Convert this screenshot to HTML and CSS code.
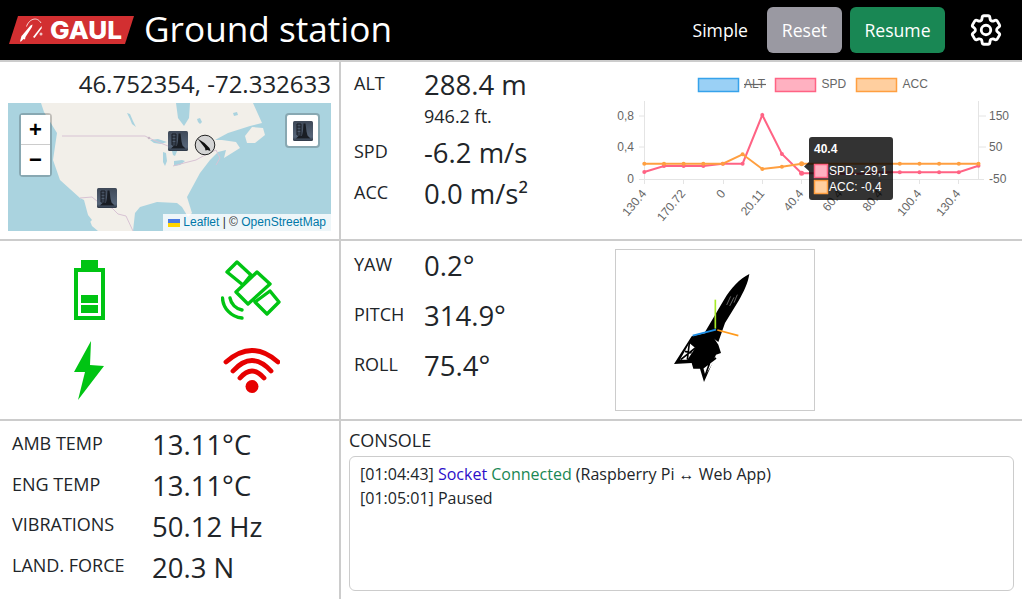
FILE: index.html
```html
<!DOCTYPE html>
<html lang="en">
<head>
<meta charset="utf-8">
<title>Ground station</title>
<link rel="stylesheet" href="styles.css">
</head>
<body>
<svg class="defs" width="0" height="0" aria-hidden="true">
  <defs>
    <linearGradient id="towerbg" x1="0" y1="0" x2="0" y2="1"><stop offset="0" stop-color="#3f4958"/><stop offset=".8" stop-color="#566579"/><stop offset="1" stop-color="#2c3644"/></linearGradient>
    <symbol id="tower" viewBox="0 0 20 20">
      <rect x="0" y="0" width="20" height="20" rx="1.500" fill="url(#towerbg)"/>
      <path d="M4 3h4v11H4zM4 6h4M4 9h4M4 12h4" fill="none" stroke="#191d24" stroke-width="1"/>
      <path d="M10.500 2.500l2 0 1 8 1 4 3 3H3l3-3h3l1-5z" fill="#191d24"/>
    </symbol>
  </defs>
</svg>
<div class="app">
  <header class="topbar">
    <svg class="logo" viewBox="0 0 125 28" width="125" height="28">
      <polygon points="9,0 125,0 116,28 0,28" fill="#d22f31"/>
      <path d="M11 25.500l1.500-5.500 1-1 8-9.500 2-1-.5 2.500-6.500 10-.5 2.500-1.500-.5-2.500 2.500z" fill="#fff"/>
      <path d="M24 21l7-9 2-2-.5 2.500-7 9.500z" fill="#fff"/>
      <path d="M17.500 10.500C20 3 28 0 32 7" fill="none" stroke="#fff" stroke-width=".8"/>
      <circle cx="32" cy="18" r="1.500" fill="#f2c6c6"/>
      <text class="logo-text" x="41" y="22.500" textLength="72" lengthAdjust="spacingAndGlyphs">GAUL</text>
    </svg>
    <h1 class="title">Ground station</h1>
    <nav class="actions">
      <span class="simple">Simple</span>
      <button class="btn btn-reset" type="button">Reset</button>
      <button class="btn btn-resume" type="button">Resume</button>
      <svg class="gear" viewBox="0 0 24 24" width="38" height="38" fill="none" stroke="#fff" stroke-width="1.800" stroke-linejoin="round">
        <path d="M9.594 3.94c.09-.542.56-.94 1.11-.94h2.593c.55 0 1.02.398 1.11.94l.213 1.281c.063.374.313.686.645.87.074.04.147.083.22.127.325.196.72.257 1.075.124l1.217-.456a1.125 1.125 0 0 1 1.37.49l1.296 2.247a1.125 1.125 0 0 1-.26 1.431l-1.003.827c-.293.241-.438.613-.43.992a7.723 7.723 0 0 1 0 .255c-.008.378.137.75.43.991l1.004.827c.424.35.534.955.26 1.43l-1.298 2.247a1.125 1.125 0 0 1-1.369.491l-1.217-.456c-.355-.133-.75-.072-1.076.124a6.47 6.47 0 0 1-.22.128c-.331.183-.581.495-.644.869l-.213 1.281c-.09.543-.56.94-1.11.94h-2.594c-.55 0-1.019-.398-1.11-.94l-.213-1.281c-.062-.374-.312-.686-.644-.87a6.52 6.52 0 0 1-.22-.127c-.325-.196-.72-.257-1.076-.124l-1.217.456a1.125 1.125 0 0 1-1.369-.49l-1.297-2.247a1.125 1.125 0 0 1 .26-1.431l1.004-.827c.292-.24.437-.613.43-.991a6.932 6.932 0 0 1 0-.255c.007-.38-.138-.751-.43-.992l-1.004-.827a1.125 1.125 0 0 1-.26-1.43l1.297-2.247a1.125 1.125 0 0 1 1.37-.491l1.216.456c.356.133.751.072 1.076-.124.072-.044.146-.086.22-.128.332-.183.582-.495.644-.869l.214-1.28Z"/>
        <circle cx="12" cy="12" r="3"/>
      </svg>
    </nav>
  </header>

  <main class="board">
    <section class="cell gps">
      <div class="coords">46.752354, -72.332633</div>
      <div class="map">
        <svg class="map-base" viewBox="8 103 323 128" width="323" height="128">
          <rect x="8" y="103" width="323" height="128" fill="#aad3df"/>
          <path d="M41 103L44 112 57 133 53 160 60 180 80 198 84 206 92 226 98 231H133L135 213 140 207 157 202 177 203 182 207 188 217 192 213 187 197 200 173 210 160 218 152 226 150 224 158 240 148 236 142 222 140 215 140 228 133 250 126 262 123 253 103Z" fill="#f2efe9"/>
          <path d="M245 136L252 127 263 128 265 135 255 143 247 143Z" fill="#f2efe9"/>
          <path d="M176 103H190L189 118 184 126 178 118ZM80 198L84 200 88 215 92 220 90 222 84 210ZM150 140l8-1 9 3-6 2-7-1ZM163 152l3 1 1 8-2 5-2-4ZM170 146l6-2 2 5-3 7-2-1-1-4ZM174 161l8-1 3 1-5 4-6 1ZM127 113l3 1 3 7 3 6-4-3-2-5ZM197 119l3-1 2 4-2 2-2-2ZM233 113l4-1 1 3-4 1Z" fill="#aad3df"/>
          <path d="M62 136H145L149 138 158 142 168 146M173 166L184 163 196 160 205 155 216 150 220 158 216 165M80 198L92 197 103 206 112 208 118 214 126 216 133 231" fill="none" stroke="#d8c3d4" stroke-width="1"/>
          <circle cx="149" cy="138" r="1.300" fill="#c9b8c6"/>
        </svg>
        <svg class="marker marker-a"><use href="#tower"/></svg>
        <svg class="marker marker-b"><use href="#tower"/></svg>
        <svg class="rocket-marker" viewBox="0 0 22 22" width="22" height="22">
          <circle cx="11" cy="11" r="9.800" fill="#d4d4d4" stroke="#222" stroke-width="1"/>
          <path d="M3.500 4.500l7 4.500 5 5 1 3-3-1-2 .5-.5-2.500z" fill="#111"/>
        </svg>
        <div class="zoom-ctl"><span class="zoom-btn zoom-in">+</span><span class="zoom-btn">−</span></div>
        <div class="layers"><svg class="layer-icon"><use href="#tower"/></svg></div>
        <div class="attribution"><svg class="flag" viewBox="0 0 12 8" width="12" height="8"><rect width="12" height="4" fill="#4c7be1"/><rect y="4" width="12" height="4" fill="#ffd500"/></svg> <span class="link">Leaflet</span> | © <span class="link">OpenStreetMap</span></div>
      </div>
    </section>

    <section class="cell flight">
      <div class="stats">
        <div class="stat stat-alt"><span class="label">ALT</span><span class="value">288.4 m</span></div>
        <div class="sub">946.2 ft.</div>
        <div class="stat stat-spd"><span class="label">SPD</span><span class="value">-6.2 m/s</span></div>
        <div class="stat stat-acc"><span class="label">ACC</span><span class="value">0.0 m/s²</span></div>
      </div>
      <svg class="chart" viewBox="600 62 422 176" width="422" height="176">
        <g class="legend">
          <rect x="699.500" y="78.500" width="40" height="13" fill="#9ad0f5" stroke="#36a2eb" stroke-width="1.500"/>
          <text x="745" y="88">ALT</text><line x1="745" y1="84.500" x2="767" y2="84.500" stroke="#666" stroke-width="1.200"/>
          <rect x="776.500" y="78.500" width="40" height="13" fill="#ffb1c1" stroke="#ff6384" stroke-width="1.500"/>
          <text x="822.500" y="88">SPD</text>
          <rect x="857.500" y="78.500" width="40" height="13" fill="#ffcf9f" stroke="#ff9f40" stroke-width="1.500"/>
          <text x="903.500" y="88">ACC</text>
        </g>
        <g stroke="#e4e4e4" stroke-width="1">
          <line x1="645.500" y1="101" x2="645.500" y2="184"/>
          <line x1="979.500" y1="101" x2="979.500" y2="179"/>
          <line x1="640" y1="179.500" x2="985" y2="179.500"/>
          <line x1="640" y1="116" x2="645" y2="116"/><line x1="640" y1="147" x2="645" y2="147"/>
          <line x1="980" y1="116" x2="987" y2="116"/><line x1="980" y1="147" x2="987" y2="147"/>
          <line x1="684.500" y1="179" x2="684.500" y2="184"/><line x1="724.500" y1="179" x2="724.500" y2="184"/><line x1="763.500" y1="179" x2="763.500" y2="184"/><line x1="802.500" y1="179" x2="802.500" y2="184"/><line x1="841.500" y1="179" x2="841.500" y2="184"/><line x1="881.500" y1="179" x2="881.500" y2="184"/><line x1="920.500" y1="179" x2="920.500" y2="184"/><line x1="959.500" y1="179" x2="959.500" y2="184"/>
        </g>
        <g class="ticks">
          <text class="end" x="635" y="120">0,8</text><text class="end" x="635" y="151">0,4</text><text class="end" x="635" y="183">0</text>
          <text x="990" y="120">150</text><text x="990" y="151">50</text><text x="990" y="183">-50</text>
          <text class="end" transform="translate(648 194) rotate(-50)">130.4</text>
          <text class="end" transform="translate(687 194) rotate(-50)">170.72</text>
          <text class="end" transform="translate(727 194) rotate(-50)">0</text>
          <text class="end" transform="translate(766 194) rotate(-50)">20.11</text>
          <text class="end" transform="translate(805 194) rotate(-50)">40.4</text>
          <text class="end" transform="translate(844 194) rotate(-50)">60.4</text>
          <text class="end" transform="translate(884 194) rotate(-50)">80.4</text>
          <text class="end" transform="translate(923 194) rotate(-50)">100.4</text>
          <text class="end" transform="translate(962 194) rotate(-50)">130.4</text>
        </g>
        <polyline class="ln-spd" points="645.300,172 665,166 684.600,166 704.300,166 723.900,163.700 743.600,163.700 763.300,115 782.900,154 802.600,173.300 822.200,173.300 841.900,173.800 861.500,173.800 881.200,172.300 900.800,172.300 920.500,172.300 940.100,172.300 959.800,172.300 979.500,165.700"/>
        <polyline class="ln-acc" points="645.300,163.700 665,163.700 684.600,163.700 704.300,163.700 723.900,163.700 743.600,154.300 763.300,169 782.900,166.700 802.600,163.700 822.200,163.700 841.900,163.700 861.500,163.700 881.200,163.700 900.800,163.700 920.500,163.700 940.100,163.700 959.800,163.700 979.500,163.700"/>
        <g class="pt-spd"><circle cx="645.300" cy="172" r="2"/><circle cx="665" cy="166" r="2"/><circle cx="684.600" cy="166" r="2"/><circle cx="704.300" cy="166" r="2"/><circle cx="723.900" cy="163.700" r="2"/><circle cx="743.600" cy="163.700" r="2"/><circle cx="763.300" cy="115" r="2"/><circle cx="782.900" cy="154" r="2"/><circle cx="802.600" cy="173.300" r="2.500"/><circle cx="900.800" cy="172.300" r="2"/><circle cx="920.500" cy="172.300" r="2"/><circle cx="940.100" cy="172.300" r="2"/><circle cx="959.800" cy="172.300" r="2"/><circle cx="979.500" cy="165.700" r="2"/></g>
        <g class="pt-acc"><circle cx="645.300" cy="163.700" r="2"/><circle cx="665" cy="163.700" r="2"/><circle cx="684.600" cy="163.700" r="2"/><circle cx="704.300" cy="163.700" r="2"/><circle cx="723.900" cy="163.700" r="2"/><circle cx="743.600" cy="154.300" r="2"/><circle cx="763.300" cy="169" r="2"/><circle cx="782.900" cy="166.700" r="2"/><circle cx="802.600" cy="163.700" r="2.500"/><circle cx="900.800" cy="163.700" r="2"/><circle cx="920.500" cy="163.700" r="2"/><circle cx="940.100" cy="163.700" r="2"/><circle cx="959.800" cy="163.700" r="2"/><circle cx="979.500" cy="163.700" r="2"/></g>
        <path d="M810 140a3 3 0 0 1 3-3h78a3 3 0 0 1 3 3v57a3 3 0 0 1-3 3h-78a3 3 0 0 1-3-3v-26l-5-4.500 5-4.500z" fill="#000" fill-opacity=".8"/>
        <text class="tip-title" x="815" y="153">40.4</text>
        <rect x="815.500" y="164.500" width="13" height="13" fill="#ffb1c1" stroke="#ff6384" stroke-width="1.500"/>
        <text class="tip-body" x="830" y="174.500">SPD: -29,1</text>
        <rect x="815.500" y="180.500" width="13" height="13" fill="#ffcf9f" stroke="#ff9f40" stroke-width="1.500"/>
        <text class="tip-body" x="830" y="190.500">ACC: -0,4</text>
      </svg>
    </section>

    <section class="cell status">
      <svg class="ico" viewBox="0 0 31 60" width="31" height="60">
        <path d="M7 0h17v8h7v52H0V8h7z" fill="#00c413"/><rect x="4" y="12" width="23" height="44" fill="#fff"/><rect x="7" y="35" width="17" height="8" fill="#00c413"/><rect x="7" y="45" width="17" height="8" fill="#00c413"/>
      </svg>
      <svg class="ico" viewBox="0 0 60 60" width="60" height="60" fill="none" stroke="#00c413" stroke-width="3.400" stroke-linejoin="round" stroke-linecap="round">
        <path d="M16 2L30 15 22 25 6 12ZM36 12L49 24 27 44 15 32ZM49 31L58 42 46 54 34 42Z"/>
        <path d="M1.500 38C2 48 10 57 21 58M9 38C10 44 15 49 21 50"/>
      </svg>
      <svg class="ico" viewBox="0 0 30 59" width="30" height="59">
        <path d="M17 0L0 31 11 31 4 59 30 25 16 24z" fill="#00c413"/>
      </svg>
      <svg class="ico" viewBox="0 0 57 45" width="57" height="45" fill="none" stroke="#e60000" stroke-width="4.800" stroke-linecap="round">
        <path d="M3 14Q29-9 55 14M10 23Q29 2 48 23M17 30Q29 16 41 30"/>
        <circle cx="29" cy="38.500" r="6.500" fill="#e60000" stroke="none"/>
      </svg>
    </section>

    <section class="cell attitude">
      <div class="stats stats-att">
        <div class="stat"><span class="label">YAW</span><span class="value">0.2°</span></div>
        <div class="stat"><span class="label">PITCH</span><span class="value">314.9°</span></div>
        <div class="stat"><span class="label">ROLL</span><span class="value">75.4°</span></div>
      </div>
      <div class="view3d">
        <svg viewBox="18 16 594 480" width="198" height="160">
          <path d="M418 88C414 115 402 140 385 170L345 235 325 292 285 262 342 165C362 130 390 102 418 88Z" fill="#000"/>
          <path d="M245 275L300 262 325 300 333 325 318 330 282 412 270 372 250 372 245 355 192 358Z" fill="#000"/>
          <path d="M238 295L210 345 232 345 256 310ZM286 392L318 340 300 352 280 370Z" fill="#fff"/>
          <path d="M238 295L232 345M212 345L256 310M286 392L300 352M278 370L318 340M225 320L245 325" stroke="#000" stroke-width="5" fill="none"/>
          <path d="M362 155l-12 26M372 158l-13 26M382 150l-10 24" stroke="#999" stroke-width="2" fill="none"/>
          <line x1="316" y1="252" x2="316" y2="165" stroke="#a8ea28" stroke-width="5"/>
          <line x1="318" y1="255" x2="248" y2="273" stroke="#1c8ee6" stroke-width="5"/>
          <line x1="322" y1="256" x2="385" y2="273" stroke="#ff9a1c" stroke-width="5"/>
        </svg>
      </div>
    </section>

    <section class="cell sensors">
      <div class="stat"><span class="label">AMB TEMP</span><span class="value">13.11°C</span></div>
      <div class="stat"><span class="label">ENG TEMP</span><span class="value">13.11°C</span></div>
      <div class="stat"><span class="label">VIBRATIONS</span><span class="value">50.12 Hz</span></div>
      <div class="stat"><span class="label">LAND. FORCE</span><span class="value">20.3 N</span></div>
    </section>

    <section class="cell console">
      <div class="console-title">CONSOLE</div>
      <div class="console-box">
        <div>[01:04:43] <span class="c-socket">Socket</span> <span class="c-ok">Connected</span> (Raspberry Pi ↔ Web App)</div>
        <div>[01:05:01] Paused</div>
      </div>
    </section>
  </main>
</div>
</body>
</html>
```
FILE: styles.css
```css
* { box-sizing: border-box; }
html, body { margin: 0; height: 100%; overflow: hidden; }
body { font-family: "Open Sans", sans-serif; color: #212529; background: #fff; }
.defs { position: absolute; }
.app { display: flex; flex-direction: column; height: 599px; }

.topbar { height: 60px; background: #000; display: flex; align-items: center; flex: none; }
.logo { margin: 0 10px 0 9px; flex: none; }
.logo-text { font-family: Inter, sans-serif; font-weight: 800; font-size: 25px; fill: #fff; }
.title { margin: 0 0 3px; font-size: 35.200px; font-weight: 500; color: #fff; line-height: 1; }
.actions { margin-left: auto; display: flex; align-items: center; padding-right: 17px; }
.simple { color: #fff; font-size: 17.600px; margin-right: 19px; }
.btn { height: 46px; border: 0; border-radius: 6px; color: #fff; font: 400 17.600px "Open Sans", sans-serif; padding: 0 0 1px; }
.btn-reset { width: 75px; background: #9a99a2; margin-right: 8px; }
.btn-resume { width: 95px; background: #198754; margin-right: 22px; }

.board { flex: 1; display: grid; grid-template-columns: 341px 1fr; grid-template-rows: 179px 180px 1fr; min-height: 0; }
.cell { border-top: 2px solid #ccc; min-width: 0; }
.gps, .status, .sensors { border-right: 2px solid #ccc; }

.gps { padding: 8px 8px 0; }
.coords { font-size: 24px; text-align: right; line-height: 28px; height: 33px; }
.map { position: relative; width: 323px; height: 128px; overflow: hidden; }
.map-base { display: block; }
.marker { position: absolute; width: 20px; height: 20px; }
.marker-a { left: 160px; top: 28px; }
.marker-b { left: 89px; top: 85px; }
.rocket-marker { position: absolute; left: 186px; top: 31px; }
.zoom-ctl { position: absolute; left: 11px; top: 10px; width: 33px; display: flex; flex-direction: column; border: 2px solid rgba(0,0,0,.2); border-radius: 4px; background-clip: padding-box; }
.zoom-btn { height: 30px; background: #fff; text-align: center; font: 700 22px/29px "Liberation Sans", sans-serif; color: #000; }
.zoom-in { border-bottom: 1px solid #ccc; }
.layers { position: absolute; left: 277px; top: 10px; width: 35px; height: 35px; background: #fff; border: 2px solid rgba(0,0,0,.2); border-radius: 4px; background-clip: padding-box; display: flex; align-items: center; justify-content: center; }
.layer-icon { width: 20px; height: 20px; }
.attribution { position: absolute; right: 0; bottom: 0; height: 17px; padding: 0 5px; background: rgba(255,255,255,.8); font: 12px/17px "Liberation Sans", sans-serif; color: #333; white-space: nowrap; }
.flag { vertical-align: -0.500px; }
.link { color: #0078a8; }

.flight { display: flex; }
.stats { width: 258px; padding-left: 13px; flex: none; }
.stat { display: flex; align-items: center; }
.label { font-size: 18px; line-height: 24px; width: 70px; flex: none; padding-bottom: 5px; }
.value { font-size: 27.500px; line-height: 38px; }
.stat-alt { margin-top: 4px; }
.sub { font-size: 18px; line-height: 22px; padding-left: 70px; margin-top: 1px; }
.stat-spd { margin-top: 7px; }
.stat-acc { margin-top: 3px; }
.chart { display: block; flex: none; }
.legend text, .ticks text { font: 12px "Liberation Sans", sans-serif; fill: #666; }
.ticks .end { text-anchor: end; }
.ln-spd { fill: none; stroke: #ff6384; stroke-width: 2; }
.ln-acc { fill: none; stroke: #ff9f40; stroke-width: 2; }
.pt-spd { fill: #ff6384; }
.pt-acc { fill: #ff9f40; }
.tip-title { font: 700 12px "Liberation Sans", sans-serif; fill: #fff; }
.tip-body { font: 12px "Liberation Sans", sans-serif; fill: #fff; }

.status { display: grid; grid-template-columns: 162px 162px; grid-template-rows: 81px 81px; padding: 8px 0 0 8px; justify-items: center; align-items: center; }
.ico { display: block; }

.attitude { display: flex; }
.stats-att { display: flex; flex-direction: column; gap: 2px; padding-top: 1px; }
.stats-att .stat { height: 48px; }
.view3d { width: 200px; height: 162px; margin: 8px 0 0 16px; border: 1px solid #ccc; }
.view3d svg { display: block; }

.sensors { padding: 4px 0 0 12px; }
.sensors .stat { height: 40.800px; }
.sensors .label { width: 140px; }
.console { padding: 7px 8px 0 8px; }
.console-title { font-size: 18px; line-height: 24px; }
.console-box { width: 665px; height: 135px; margin-top: 4px; border: 1px solid #ccc; border-radius: 6px; padding: 5px 10px; font-size: 16px; line-height: 24px; }
.c-socket { color: #2c0ec9; }
.c-ok { color: #198754; }
```
